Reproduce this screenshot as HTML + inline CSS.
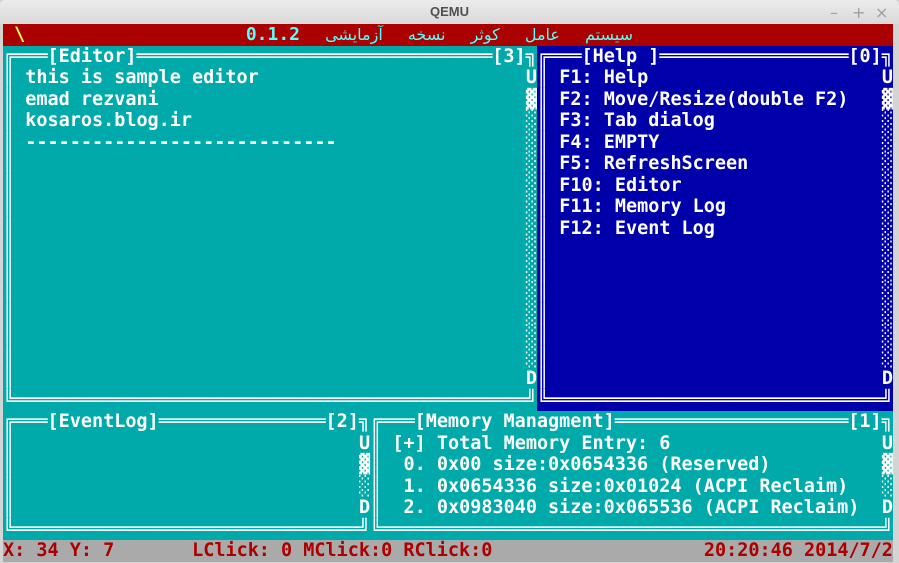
<!DOCTYPE html>
<html><head><meta charset="utf-8"><style>
html,body{margin:0;padding:0;width:899px;height:563px;overflow:hidden;background:#d4d4d4;}
#tb{position:absolute;left:0;top:0;width:899px;height:24px;background:linear-gradient(#ececec,#d9d9d9);border-radius:5px 5px 0 0;}
#tb .t{position:absolute;left:0;width:899px;top:4px;text-align:center;font:bold 13px "Liberation Sans",sans-serif;color:#505050;}
#tb .b{position:absolute;top:3px;font:16px "DejaVu Sans",sans-serif;color:#a0a0a0;}
#scr{position:absolute;left:3px;top:24px;width:890px;height:538px;background:#00aaaa;overflow:hidden;}
.c{position:absolute;font:bold 18.48px/21.5px "DejaVu Sans Mono",monospace;white-space:pre;color:#fff;}
.n{font-weight:normal;}
</style></head><body>
<div id="tb"><div class="t">QEMU</div>
<div class="b" style="left:830px">–</div><div class="b" style="left:852px">+</div><div class="b" style="left:875px">×</div></div>
<div id="scr">
<div style="position:absolute;left:0;top:0;width:890px;height:21.5px;background:#aa0000"></div>
<div style="position:absolute;left:534px;top:21.5px;width:356px;height:365.5px;background:#0000aa"></div>
<div style="position:absolute;left:0;top:516px;width:890px;height:22px;background:#aaaaaa"></div>
<div class="c" style="left:11.1px;top:0;color:#ffff55">\</div>
<div style="position:absolute;left:200px;top:1px;width:430px;height:20px;direction:rtl;text-align:right;font:16px/20px 'DejaVu Sans',sans-serif;color:#55ffff;word-spacing:20px;letter-spacing:1px;white-space:nowrap">سیستم عامل کوثر نسخه آزمایشی <b style="font-family:'DejaVu Sans Mono',monospace;font-size:18px;word-spacing:0">0.1.2</b></div>

<!-- Editor -->
<div class="c n" style="left:0;top:21.5px">╔═══<b>[Editor]</b>════════════════════════════════<b>[3]</b>╗</div>
<div class="c n" style="left:0;top:43px">║
║
║
║
║
║
║
║
║
║
║
║
║
║
║</div>
<div class="c" style="left:522.9px;top:43px">U
<span class="n">▓
░
░
░
░
░
░
░
░
░
░
░
░</span>
D</div>
<div class="c n" style="left:0;top:365.5px">╚══════════════════════════════════════════════╝</div>
<div class="c" style="left:22.25px;top:43px">this is sample editor
emad rezvani
kosaros.blog.ir
----------------------------</div>

<!-- Help -->
<div class="c n" style="left:534px;top:21.5px">╔═══<b>[Help ]</b>═════════════════<b>[0]</b>╗</div>
<div class="c n" style="left:534px;top:43px">║
║
║
║
║
║
║
║
║
║
║
║
║
║
║</div>
<div class="c" style="left:878.9px;top:43px">U
<span class="n">▓
░
░
░
░
░
░
░
░
░
░
░
░</span>
D</div>
<div class="c n" style="left:534px;top:365.5px">╚══════════════════════════════╝</div>
<div class="c" style="left:556.25px;top:43px">F1: Help
F2: Move/Resize(double F2)
F3: Tab dialog
F4: EMPTY
F5: RefreshScreen
F10: Editor
F11: Memory Log
F12: Event Log</div>

<!-- EventLog -->
<div class="c n" style="left:0;top:387px">╔═══<b>[EventLog]</b>═══════════════<b>[2]</b>╗</div>
<div class="c n" style="left:0;top:408.5px">║
║
║
║</div>
<div class="c" style="left:356px;top:408.5px">U
<span class="n">▓
░</span>
D</div>
<div class="c n" style="left:0;top:494.5px">╚═══════════════════════════════╝</div>

<!-- Memory -->
<div class="c n" style="left:367.1px;top:387px">╔═══<b>[Memory Managment]</b>═════════════════════<b>[1]</b>╗</div>
<div class="c n" style="left:367.1px;top:408.5px">║
║
║
║</div>
<div class="c" style="left:878.9px;top:408.5px">U
<span class="n">▓
░</span>
D</div>
<div class="c n" style="left:367.1px;top:494.5px">╚═════════════════════════════════════════════╝</div>
<div class="c" style="left:389.4px;top:408.5px">[+] Total Memory Entry: 6
 0. 0x00 size:0x0654336 (Reserved)
 1. 0x0654336 size:0x01024 (ACPI Reclaim)
 2. 0x0983040 size:0x065536 (ACPI Reclaim)</div>

<!-- status -->
<div class="c" style="left:0;top:516px;color:#aa0000">X: 34 Y: 7</div>
<div class="c" style="left:189.1px;top:516px;color:#aa0000">LClick: 0 MClick:0 RClick:0</div>
<div class="c" style="left:700.9px;top:516px;color:#aa0000">20:20:46 2014/7/2</div>
</div>
</body></html>
